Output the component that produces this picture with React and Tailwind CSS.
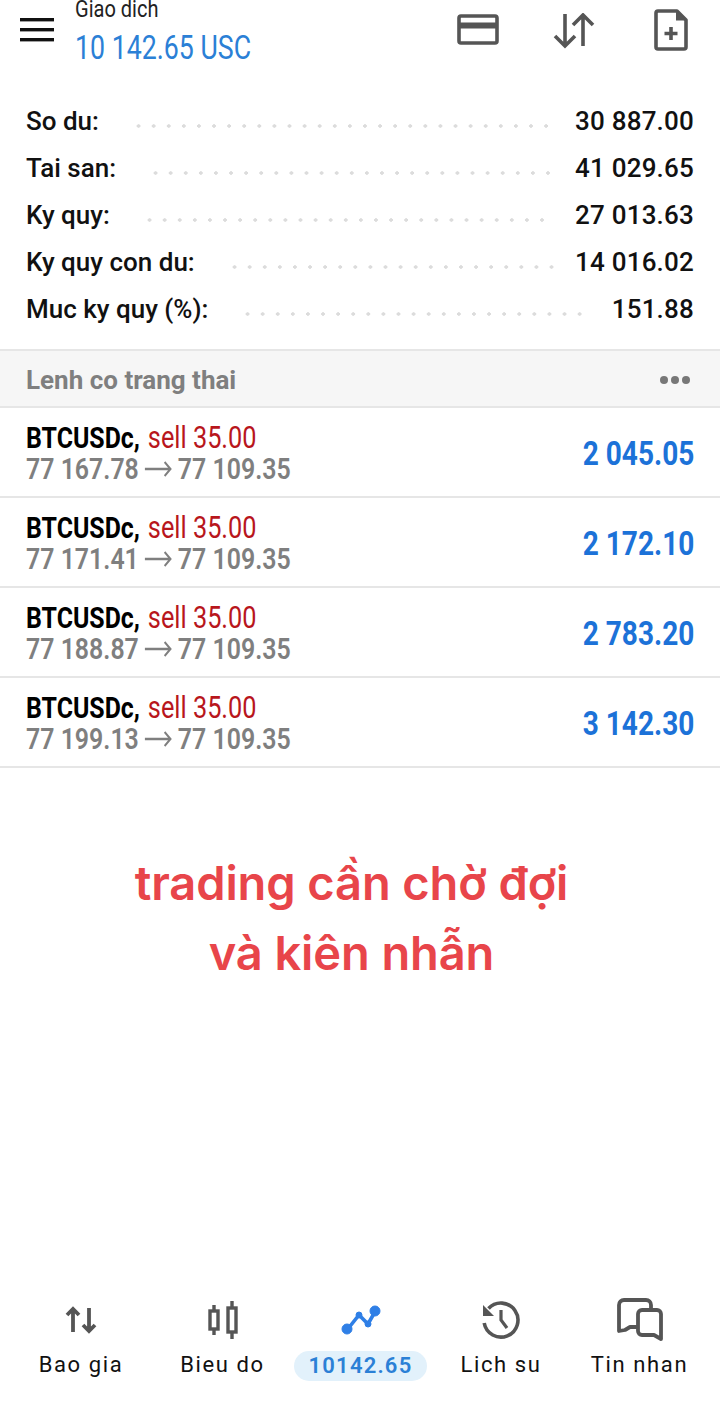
import React from "react";

const summary = [
  { label: "So du:", value: "30 887.00" },
  { label: "Tai san:", value: "41 029.65" },
  { label: "Ky quy:", value: "27 013.63" },
  { label: "Ky quy con du:", value: "14 016.02" },
  { label: "Muc ky quy (%):", value: "151.88" },
];

const orders = [
  { open: "77 167.78", now: "77 109.35", profit: "2 045.05" },
  { open: "77 171.41", now: "77 109.35", profit: "2 172.10" },
  { open: "77 188.87", now: "77 109.35", profit: "2 783.20" },
  { open: "77 199.13", now: "77 109.35", profit: "3 142.30" },
];

const MenuIcon = () => (
  <svg width="36" height="26" viewBox="0 0 36 26" fill="#111">
    <rect x="1" y="1" width="34" height="3.4" />
    <rect x="1" y="11" width="34" height="3.4" />
    <rect x="1" y="21" width="34" height="3.4" />
  </svg>
);

const CardIcon = () => (
  <svg width="42" height="32" viewBox="0 0 42 32" fill="none" stroke="#555" strokeWidth="3.6">
    <rect x="2" y="2" width="38" height="27" rx="2" />
    <path d="M2 11.5h38" strokeWidth="6" />
  </svg>
);

const SortIcon = () => (
  <svg width="44" height="36" viewBox="0 0 44 36" fill="none" stroke="#555" strokeWidth="3.6">
    <path d="M12 1v32M2 23l10 10 10-10" />
    <path d="M30 33V2M20 12L30 2l10 10" />
  </svg>
);

const NewFileIcon = () => (
  <svg width="34" height="42" viewBox="0 0 34 42" fill="none" stroke="#555" strokeWidth="3.6">
    <path d="M4 2h19l9 9v27a2 2 0 0 1-2 2H4a2 2 0 0 1-2-2V4a2 2 0 0 1 2-2z" strokeLinejoin="round" />
    <path d="M22 2l10 9.5h-10z" fill="#555" stroke="none" />
    <path d="M17 18v13M10.500 24.500h13" />
  </svg>
);

const ArrowIcon = () => (
  <svg className="mx-[7px] inline-block align-[2px]" width="33" height="16" viewBox="0 0 33 16" fill="none" stroke="#7f7f7f" strokeWidth="2.400">
    <path d="M0 8h31M24 1l7 7-7 7" />
  </svg>
);

const QuotesIcon = () => (
  <svg width="32" height="28" viewBox="0 0 32 28" fill="none" stroke="#555" strokeWidth="3.8">
    <path d="M8 26V3M2 9l6-6 6 6" />
    <path d="M24 2v23M18 19l6 6 6-6" />
  </svg>
);

const CandlesIcon = () => (
  <svg width="30" height="38" viewBox="0 0 30 38" fill="none" stroke="#555" strokeWidth="3.4">
    <rect x="2" y="10" width="8" height="18" />
    <rect x="20" y="7" width="8" height="24" />
    <path d="M6 4v6M6 28v6M24 0v7M24 31v7" />
  </svg>
);

const ChartIcon = () => (
  <svg width="40" height="32" viewBox="0 0 40 32" fill="#2f7fe6" stroke="#2f7fe6">
    <path d="M6 26L18 11l9 9L35 6" fill="none" strokeWidth="3.6" />
    <circle cx="6" cy="25" r="5" />
    <circle cx="18" cy="11" r="3" />
    <circle cx="27" cy="20" r="3" />
    <circle cx="34" cy="7" r="5" />
  </svg>
);

const HistoryIcon = () => (
  <svg width="40" height="40" viewBox="0 0 40 40" fill="none" stroke="#555" strokeWidth="3.6">
    <path d="M7.500 8.500A17 17 0 1 1 3.200 23" />
    <path d="M2 5v11h11z" fill="#555" stroke="none" />
    <path d="M20 10v10l6 8" strokeWidth="3.2" />
  </svg>
);

const ChatIcon = () => (
  <svg width="46" height="44" viewBox="0 0 46 44" fill="none" stroke="#555" strokeWidth="3.8" strokeLinejoin="round">
    <path d="M20 29h-7l-5 3-6 1V7a5 5 0 0 1 5-5h22a5 5 0 0 1 5 5v5" />
    <path d="M25 12h15a4 4 0 0 1 4 4v25l-7-4H25a4 4 0 0 1-4-4V16a4 4 0 0 1 4-4z" />
  </svg>
);

const NavItem = ({ icon, label }) => (
  <div className="flex flex-col items-center">
    <div className="flex h-[44px] items-center justify-center">{icon}</div>
    <span className="mt-[9px] text-[22px] leading-[28px] tracking-[1.6px] text-[#111]">{label}</span>
  </div>
);

export default function App() {
  return (
    <div className="flex h-[1428px] w-[720px] flex-col overflow-hidden bg-white font-['Roboto',sans-serif]">
      {/* Top bar */}
      <header className="flex h-[76px] items-start">
        <div className="ml-[19px] mt-[17px]">
          <MenuIcon />
        </div>
        <div className="ml-[20px]">
          <div className="origin-left scale-x-[0.87] text-[23px] leading-[20px] text-[#222]">Giao dich</div>
          <div className="mt-[10px] origin-left scale-x-[0.81] whitespace-nowrap text-[33px] leading-[36px] text-[#2b80d6]">10 142.65 USC</div>
        </div>
        <div className="ml-auto mr-[32px] mt-[9px] flex items-start">
          <div className="mr-[54px] mt-[5px]"><CardIcon /></div>
          <div className="mr-[57px] mt-[4px]"><SortIcon /></div>
          <NewFileIcon />
        </div>
      </header>

      {/* Account summary */}
      <section className="mt-[22px] pl-[26px] pr-[26px]">
        {summary.map((row) => (
          <div key={row.label} className="flex h-[47px] items-center text-[#111]">
            <span className="text-[26px] font-medium">{row.label}</span>
            <span className="ml-[32px] mr-[20px] mt-[8px] h-[4px] flex-1 bg-[radial-gradient(circle,#dcdcdc_1.5px,transparent_2px)] bg-[length:15.1px_4px] bg-left bg-repeat-x" />
            <span className="text-[26px] font-medium tracking-[0.2px]">{row.value}</span>
          </div>
        ))}
      </section>

      {/* Positions header */}
      <div className="mt-[16px] flex h-[59px] items-center justify-between border-y-2 border-[#e6e6e6] bg-[#f6f6f6] pl-[26px] pr-[30px] pt-[3px]">
        <span className="text-[26px] font-bold text-[#7f7f7f]">Lenh co trang thai</span>
        <span className="flex gap-[3px]">
          <i className="size-[8px] rounded-full bg-[#777]" />
          <i className="size-[8px] rounded-full bg-[#777]" />
          <i className="size-[8px] rounded-full bg-[#777]" />
        </span>
      </div>

      {/* Positions */}
      {orders.map((order) => (
        <div key={order.open} className="flex h-[90px] items-center justify-between border-b-2 border-[#e6e6e6] pl-[26px] pr-[26px] pt-[2px]">
          <div className="origin-left scale-x-[0.83] whitespace-nowrap text-[30px] leading-[31px]">
            <div>
              <span className="inline-block font-bold text-black">BTCUSDc,</span>{" "}
              <span className="ml-[2px] inline-block text-[30.5px] text-[#b8161c]">sell 35.00</span>
            </div>
            <div className="font-semibold text-[#7f7f7f]">
              <span className="inline-block">{order.open}</span>
              <ArrowIcon />
              <span className="inline-block">{order.now}</span>
            </div>
          </div>
          <span className="mt-[2px] origin-right scale-x-[0.85] whitespace-nowrap text-[33px] font-bold text-[#1c72d8]">{order.profit}</span>
        </div>
      ))}

      {/* Caption */}
      <div className="mt-[80px] pr-[17px] text-center font-['Inter',sans-serif] text-[47px] font-semibold leading-[70px] tracking-[-0.1px] text-[#e8454a]">
        <div>trading cần chờ đợi</div>
        <div>và kiên nhẫn</div>
      </div>

      {/* Bottom nav */}
      <nav className="mb-[47px] mt-auto grid grid-cols-[150px_133px_143px_138px_139px] justify-items-center pl-[6px]">
        <NavItem icon={<QuotesIcon />} label="Bao gia" />
        <NavItem icon={<CandlesIcon />} label="Bieu do" />
        <div className="flex flex-col items-center">
          <div className="flex h-[44px] items-center justify-center"><ChartIcon /></div>
          <span className="mt-[9px] rounded-full bg-[#e2f1fb] px-[15px] text-[22px] font-semibold leading-[30px] tracking-[1.2px] text-[#2b80d6]">10142.65</span>
        </div>
        <NavItem icon={<HistoryIcon />} label="Lich su" />
        <NavItem icon={<ChatIcon />} label="Tin nhan" />
      </nav>
    </div>
  );
}
